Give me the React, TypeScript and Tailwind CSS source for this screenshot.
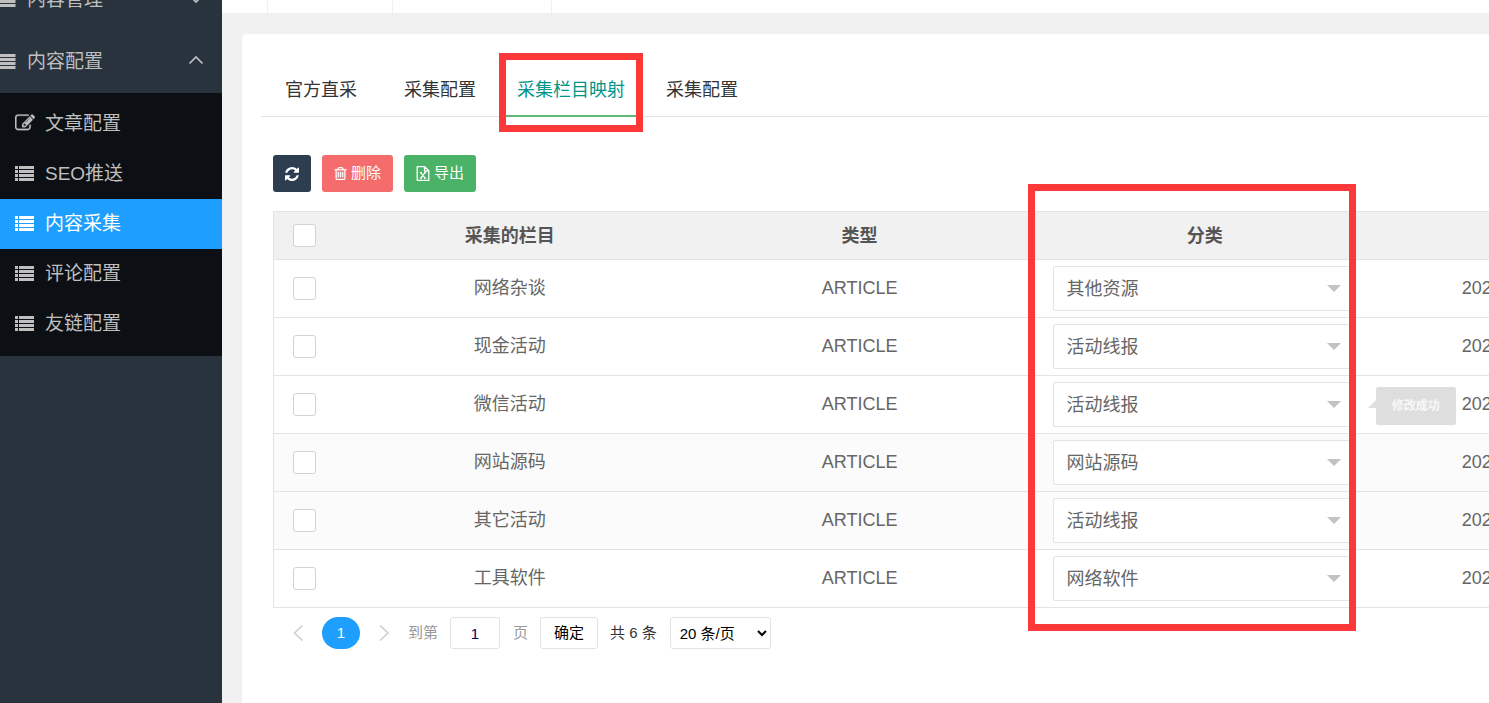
import React from "react";

type IconProps = { className?: string };

function BarsIcon({ className }: IconProps) {
  return (
    <svg viewBox="0 0 16 15" className={className} fill="currentColor" aria-hidden="true">
      <path d="M0 0h15.5v3H0zM0 4h15.5v3H0zM0 8h15.5v3H0zM0 12h15.5v3H0z" />
    </svg>
  );
}

function ListIcon({ className }: IconProps) {
  return (
    <svg viewBox="0 0 19 15" className={className} fill="currentColor" aria-hidden="true">
      <path d="M0 0h3v3H0zM4 0h15v3H4zM0 4h3v3H0zM4 4h15v3H4zM0 8h3v3H0zM4 8h15v3H4zM0 12h3v3H0zM4 12h15v3H4z" />
    </svg>
  );
}

function EditIcon({ className }: IconProps) {
  return (
    <svg viewBox="0 0 1792 1792" className={className} fill="currentColor" stroke="currentColor" strokeWidth="24" aria-hidden="true">
      <path d="M888 1184l116-116-152-152-116 116v56h96v96h56zm440-720q-16-16-33 1l-350 350q-17 17-1 33t33-1l350-350q17-17 1-33zm80 594v190q0 119-84.5 203.5t-203.5 84.5h-832q-119 0-203.5-84.5t-84.5-203.5v-832q0-119 84.5-203.5t203.5-84.5h832q63 0 117 25 15 7 18 23 3 17-9 29l-49 49q-14 14-32 8-23-6-45-6h-832q-66 0-113 47t-47 113v832q0 66 47 113t113 47h832q66 0 113-47t47-113v-126q0-13 9-22l64-64q15-15 35-7t20 29zm-96-738l288 288-672 672h-288v-288zm444 132l-92 92-288-288 92-92q28-28 68-28t68 28l152 152q28 28 28 68t-28 68z" />
    </svg>
  );
}

function RefreshIcon({ className }: IconProps) {
  return (
    <svg viewBox="0 0 1536 1536" className={className} fill="currentColor" aria-hidden="true">
      <path d="M1511 928q0 5-1 7-64 268-268 434.5t-478 166.5q-146 0-282.5-55t-243.5-157l-129 129q-19 19-45 19t-45-19-19-45v-448q0-26 19-45t45-19h448q26 0 45 19t19 45-19 45l-137 137q71 66 161 102t187 36q134 0 250-65t186-179q11-17 53-117 8-23 30-23h192q13 0 22.5 9.5t9.5 22.5zm25-800v448q0 26-19 45t-45 19h-448q-26 0-45-19t-19-45 19-45l138-138q-148-137-349-137-134 0-250 65t-186 179q-11 17-53 117-8 23-30 23h-199q-13 0-22.5-9.5t-9.5-22.5v-7q65-268 270-434.5t480-166.5q146 0 284 55.5t245 156.5l130-129q19-19 45-19t45 19 19 45z" />
    </svg>
  );
}

function TrashIcon({ className }: IconProps) {
  return (
    <svg viewBox="192 128 1408 1536" className={className} fill="currentColor" stroke="currentColor" strokeWidth="30" aria-hidden="true">
      <path d="M704 736v576q0 14-9 23t-23 9h-64q-14 0-23-9t-9-23v-576q0-14 9-23t23-9h64q14 0 23 9t9 23zm256 0v576q0 14-9 23t-23 9h-64q-14 0-23-9t-9-23v-576q0-14 9-23t23-9h64q14 0 23 9t9 23zm256 0v576q0 14-9 23t-23 9h-64q-14 0-23-9t-9-23v-576q0-14 9-23t23-9h64q14 0 23 9t9 23zm128 724v-948h-896v948q0 22 7 40.5t14.5 27 10.5 8.5h832q3 0 10.500-8.5t14.500-27 7-40.5zm-672-1076h448l-48-117q-7-9-17-11h-317q-10 2-17 11zm928 32v64q0 14-9 23t-23 9h-96v948q0 83-47 143.500t-113 60.500h-832q-66 0-113-58.500t-47-141.500v-952h-96q-14 0-23-9t-9-23v-64q0-14 9-23t23-9h309l70-167q15-37 54-63t79-26h320q40 0 79 26t54 63l70 167h309q14 0 23 9t9 23z" />
    </svg>
  );
}

function ExcelIcon({ className }: IconProps) {
  return (
    <svg viewBox="0 0 13 15" className={className} fill="none" stroke="currentColor" strokeWidth="1.3" aria-hidden="true">
      <path d="M.7.7h7.500l4.100 4.100v9.500H.7zM8 .7v4.300h4.300" strokeLinejoin="round" />
      <path d="M4.200 6.600l4.400 5.600M8.600 6.600l-4.400 5.600M3.300 6.600h2.200M7.500 6.600h2.100M3.300 12.200h2.200M7.500 12.200h2.100" />
    </svg>
  );
}

function Chevron({ d, className }: IconProps & { d: string }) {
  return (
    <svg viewBox="0 0 16 16" className={className} fill="none" stroke="currentColor" strokeWidth="1.7" aria-hidden="true">
      <path d={d} />
    </svg>
  );
}

const groups = [
  { label: "内容管理", arrow: "M1.5 4.5L8 11l6.500-6.500", open: false },
  { label: "内容配置", arrow: "M1.5 10.500L8 4l6.500 6.500", open: true },
];

const subItems = [
  { label: "文章配置", icon: EditIcon, iconClass: "w-[20px] h-[20px]" },
  { label: "SEO推送", icon: ListIcon, iconClass: "w-[19px] h-[15px]" },
  { label: "内容采集", icon: ListIcon, iconClass: "w-[19px] h-[15px]", active: true },
  { label: "评论配置", icon: ListIcon, iconClass: "w-[19px] h-[15px]" },
  { label: "友链配置", icon: ListIcon, iconClass: "w-[19px] h-[15px]" },
];

const rows = [
  { name: "网络杂谈", category: "其他资源" },
  { name: "现金活动", category: "活动线报" },
  { name: "微信活动", category: "活动线报", saved: true },
  { name: "网站源码", category: "网站源码", shaded: true },
  { name: "其它活动", category: "活动线报", shaded: true },
  { name: "工具软件", category: "网络软件" },
];

const categories = ["其他资源", "活动线报", "网站源码", "网络软件"];

const checkboxClass =
  "block mx-auto size-[23px] appearance-none rounded-[3px] border border-[#d2d2d2] bg-white checked:bg-[#1e9fff]";

function Sidebar() {
  return (
    <aside className="w-[222px] shrink-0 overflow-hidden bg-[#28333e] text-[19px] text-[#bfbfbf]">
      <nav className="-mt-8">
        {groups.map((g) => (
          <button key={g.label} type="button" aria-expanded={g.open} className="flex h-[62px] w-full items-center pr-[18px] text-left">
            <BarsIcon className="h-[15px] w-[16px]" />
            <span className="ml-[11px] flex-1 pt-[2px]">{g.label}</span>
            <Chevron d={g.arrow} className="size-4" />
          </button>
        ))}
        <ul className="mt-px bg-[#0c0f13] pt-[6px] pb-[7px]">
          {subItems.map(({ label, icon: Icon, iconClass, active }) => (
            <li key={label}>
              <a
                href="#"
                className={
                  active
                    ? "flex h-[50px] items-center bg-[#1e9fff] pl-[15px] text-white"
                    : "flex h-[50px] items-center pl-[15px]"
                }
              >
                <span className="flex w-[30px] pb-[2px]">
                  <Icon className={iconClass} />
                </span>
                <span className="pt-px">{label}</span>
              </a>
            </li>
          ))}
        </ul>
      </nav>
    </aside>
  );
}

function Tabs() {
  const tab = "h-[50px] px-[18px] pb-px";
  return (
    <div role="tablist" className="flex h-[51px] gap-[5px] border-b border-[#e4e4e4] pl-[6px] text-[18px] whitespace-nowrap text-[#333]">
      <button role="tab" type="button" className={tab + " mr-[6px]"}>官方直采</button>
      <button role="tab" type="button" className={tab}>采集配置</button>
      <div className="relative">
        <button role="tab" type="button" aria-selected="true" className="h-[51px] border-b-2 border-[#5fb878] px-[18px] text-[#009688]">
          采集栏目映射
        </button>
        <div className="pointer-events-none absolute -top-[13px] -bottom-[16px] left-0 w-full border-[7px] border-[#fd3838]" />
      </div>
      <button role="tab" type="button" className={tab}>采集配置</button>
    </div>
  );
}

function Toolbar() {
  return (
    <div className="mt-[38px] flex gap-[11px] text-[15px] text-white">
      <button type="button" aria-label="刷新" className="flex h-[37px] w-[38px] items-center justify-center rounded-[3px] bg-[#2c3e50]">
        <RefreshIcon className="size-[14px]" />
      </button>
      <button type="button" className="flex h-[37px] items-center gap-1 rounded-[3px] bg-[#f56c6c] px-3">
        <TrashIcon className="h-[13px] w-[13px]" />
        删除
      </button>
      <button type="button" className="flex h-[37px] items-center gap-1 rounded-[3px] bg-[#4bb368] px-3">
        <ExcelIcon className="h-[15px] w-[14px]" />
        导出
      </button>
    </div>
  );
}

function MappingTable() {
  return (
    <table className="mt-[19px] w-full table-fixed border-separate border-spacing-0 border-t border-l border-[#e4e4e4] text-center text-[18px] text-[#666]">
      <colgroup>
        <col className="w-[5%]" />
        <col className="w-[28.8%]" />
        <col className="w-[28.8%]" />
        <col className="w-[28%]" />
        <col />
      </colgroup>
      <thead>
        <tr className="bg-[#f1f1f1] text-[#555]">
          <th className="h-12 border-b border-[#e4e4e4]">
            <input type="checkbox" aria-label="全选" className={checkboxClass} />
          </th>
          <th className="border-b border-[#e4e4e4] pt-[2px]">采集的栏目</th>
          <th className="border-b border-[#e4e4e4] pt-[2px]">类型</th>
          <th className="relative border-b border-[#e4e4e4] pt-[2px]">
            分类
            <div className="pointer-events-none absolute -top-[28px] left-[-7px] z-10 h-[447px] w-[328px] border-[7px] border-[#fd3838]" />
          </th>
          <th className="border-b border-[#e4e4e4]" />
        </tr>
      </thead>
      <tbody>
        {rows.map((r) => (
          <tr key={r.name} className={r.shaded ? "bg-[#fbfbfb]" : "bg-white"}>
            <td className="h-[58px] border-b border-[#e4e4e4]">
              <input type="checkbox" aria-label={r.name} className={checkboxClass} />
            </td>
            <td className="border-b border-[#e4e4e4]">{r.name}</td>
            <td className="border-b border-[#e4e4e4]">ARTICLE</td>
            <td className="border-b border-[#e4e4e4] pr-[22px] pl-[18px]">
              <div className="relative">
                <select
                  aria-label={r.name + "分类"}
                  defaultValue={r.category}
                  className="block h-[45px] w-full appearance-none rounded-[2px] border border-[#e4e4e4] bg-white pt-[2px] pl-[13px] text-[#666]"
                >
                  {categories.map((c) => (
                    <option key={c}>{c}</option>
                  ))}
                </select>
                <svg viewBox="0 0 14 7" className="pointer-events-none absolute top-[19px] right-[12px] h-[7px] w-[14px] fill-[#c2c2c2]" aria-hidden="true">
                  <path d="M0 0h14L7 7z" />
                </svg>
              </div>
            </td>
            <td className="relative border-b border-[#e4e4e4] pl-[87px] text-left">
              202
              {r.saved && (
                <div role="status" className="absolute top-[11px] left-px flex h-[38px] w-[80px] items-center justify-center rounded-[2px] bg-[#dedede] text-[12px] font-bold text-[#f8f8f8]">
                  修改成功
                  <svg viewBox="0 0 8 8" className="absolute top-[13px] -left-[8px] size-2 fill-[#dedede]" aria-hidden="true">
                    <path d="M8 0v8H0z" />
                  </svg>
                </div>
              )}
            </td>
          </tr>
        ))}
      </tbody>
    </table>
  );
}

function Pagination() {
  return (
    <div className="mt-[9px] flex h-8 items-center text-[15px] whitespace-nowrap text-[#999]">
      <button type="button" aria-label="上一页" className="ml-[17px] text-[#d2d2d2]">
        <Chevron d="M12.500 .5L4.500 8l8 7.500" className="size-4" />
      </button>
      <button type="button" className="ml-4 h-8 w-[38px] rounded-full bg-[#1e9fff] text-white">1</button>
      <button type="button" aria-label="下一页" className="ml-4 text-[#d2d2d2]">
        <Chevron d="M4 .5L12 8l-8 7.500" className="size-4" />
      </button>
      <label htmlFor="page" className="ml-4">到第</label>
      <input
        id="page"
        type="text"
        defaultValue="1"
        className="ml-3 h-8 w-[50px] rounded-[3px] border border-[#e2e2e2] bg-white text-center text-[#000066]"
      />
      <span className="ml-[13px]">页</span>
      <button type="button" className="ml-3 h-8 w-[58px] rounded-[3px] border border-[#e2e2e2] bg-white text-black">确定</button>
      <span className="ml-3 text-[#333]">共 6 条</span>
      <select aria-label="每页条数" className="ml-[13px] h-8 w-[101px] rounded-[3px] border border-[#e2e2e2] bg-white pl-[5px] text-black">
        <option>20 条/页</option>
      </select>
    </div>
  );
}

export default function App() {
  return (
    <div className="flex min-h-screen overflow-hidden bg-[#f1f1f1] font-['Liberation_Sans','Noto_Sans_CJK_SC',sans-serif]">
      <Sidebar />
      <div className="flex min-w-0 flex-1 flex-col">
        <div className="flex h-[13px] shrink-0 bg-white">
          <div className="w-[46px] border-r border-[#f1f1f1]" />
          <div className="w-[125px] border-r border-[#f1f1f1]" />
          <div className="w-[159px] border-r border-[#f1f1f1]" />
        </div>
        <main className="mt-[21px] ml-5 flex-1 rounded-tl-[5px] bg-white pt-8 pl-[19px]">
          <Tabs />
          <div className="pl-3">
            <Toolbar />
            <MappingTable />
            <Pagination />
          </div>
        </main>
      </div>
    </div>
  );
}
